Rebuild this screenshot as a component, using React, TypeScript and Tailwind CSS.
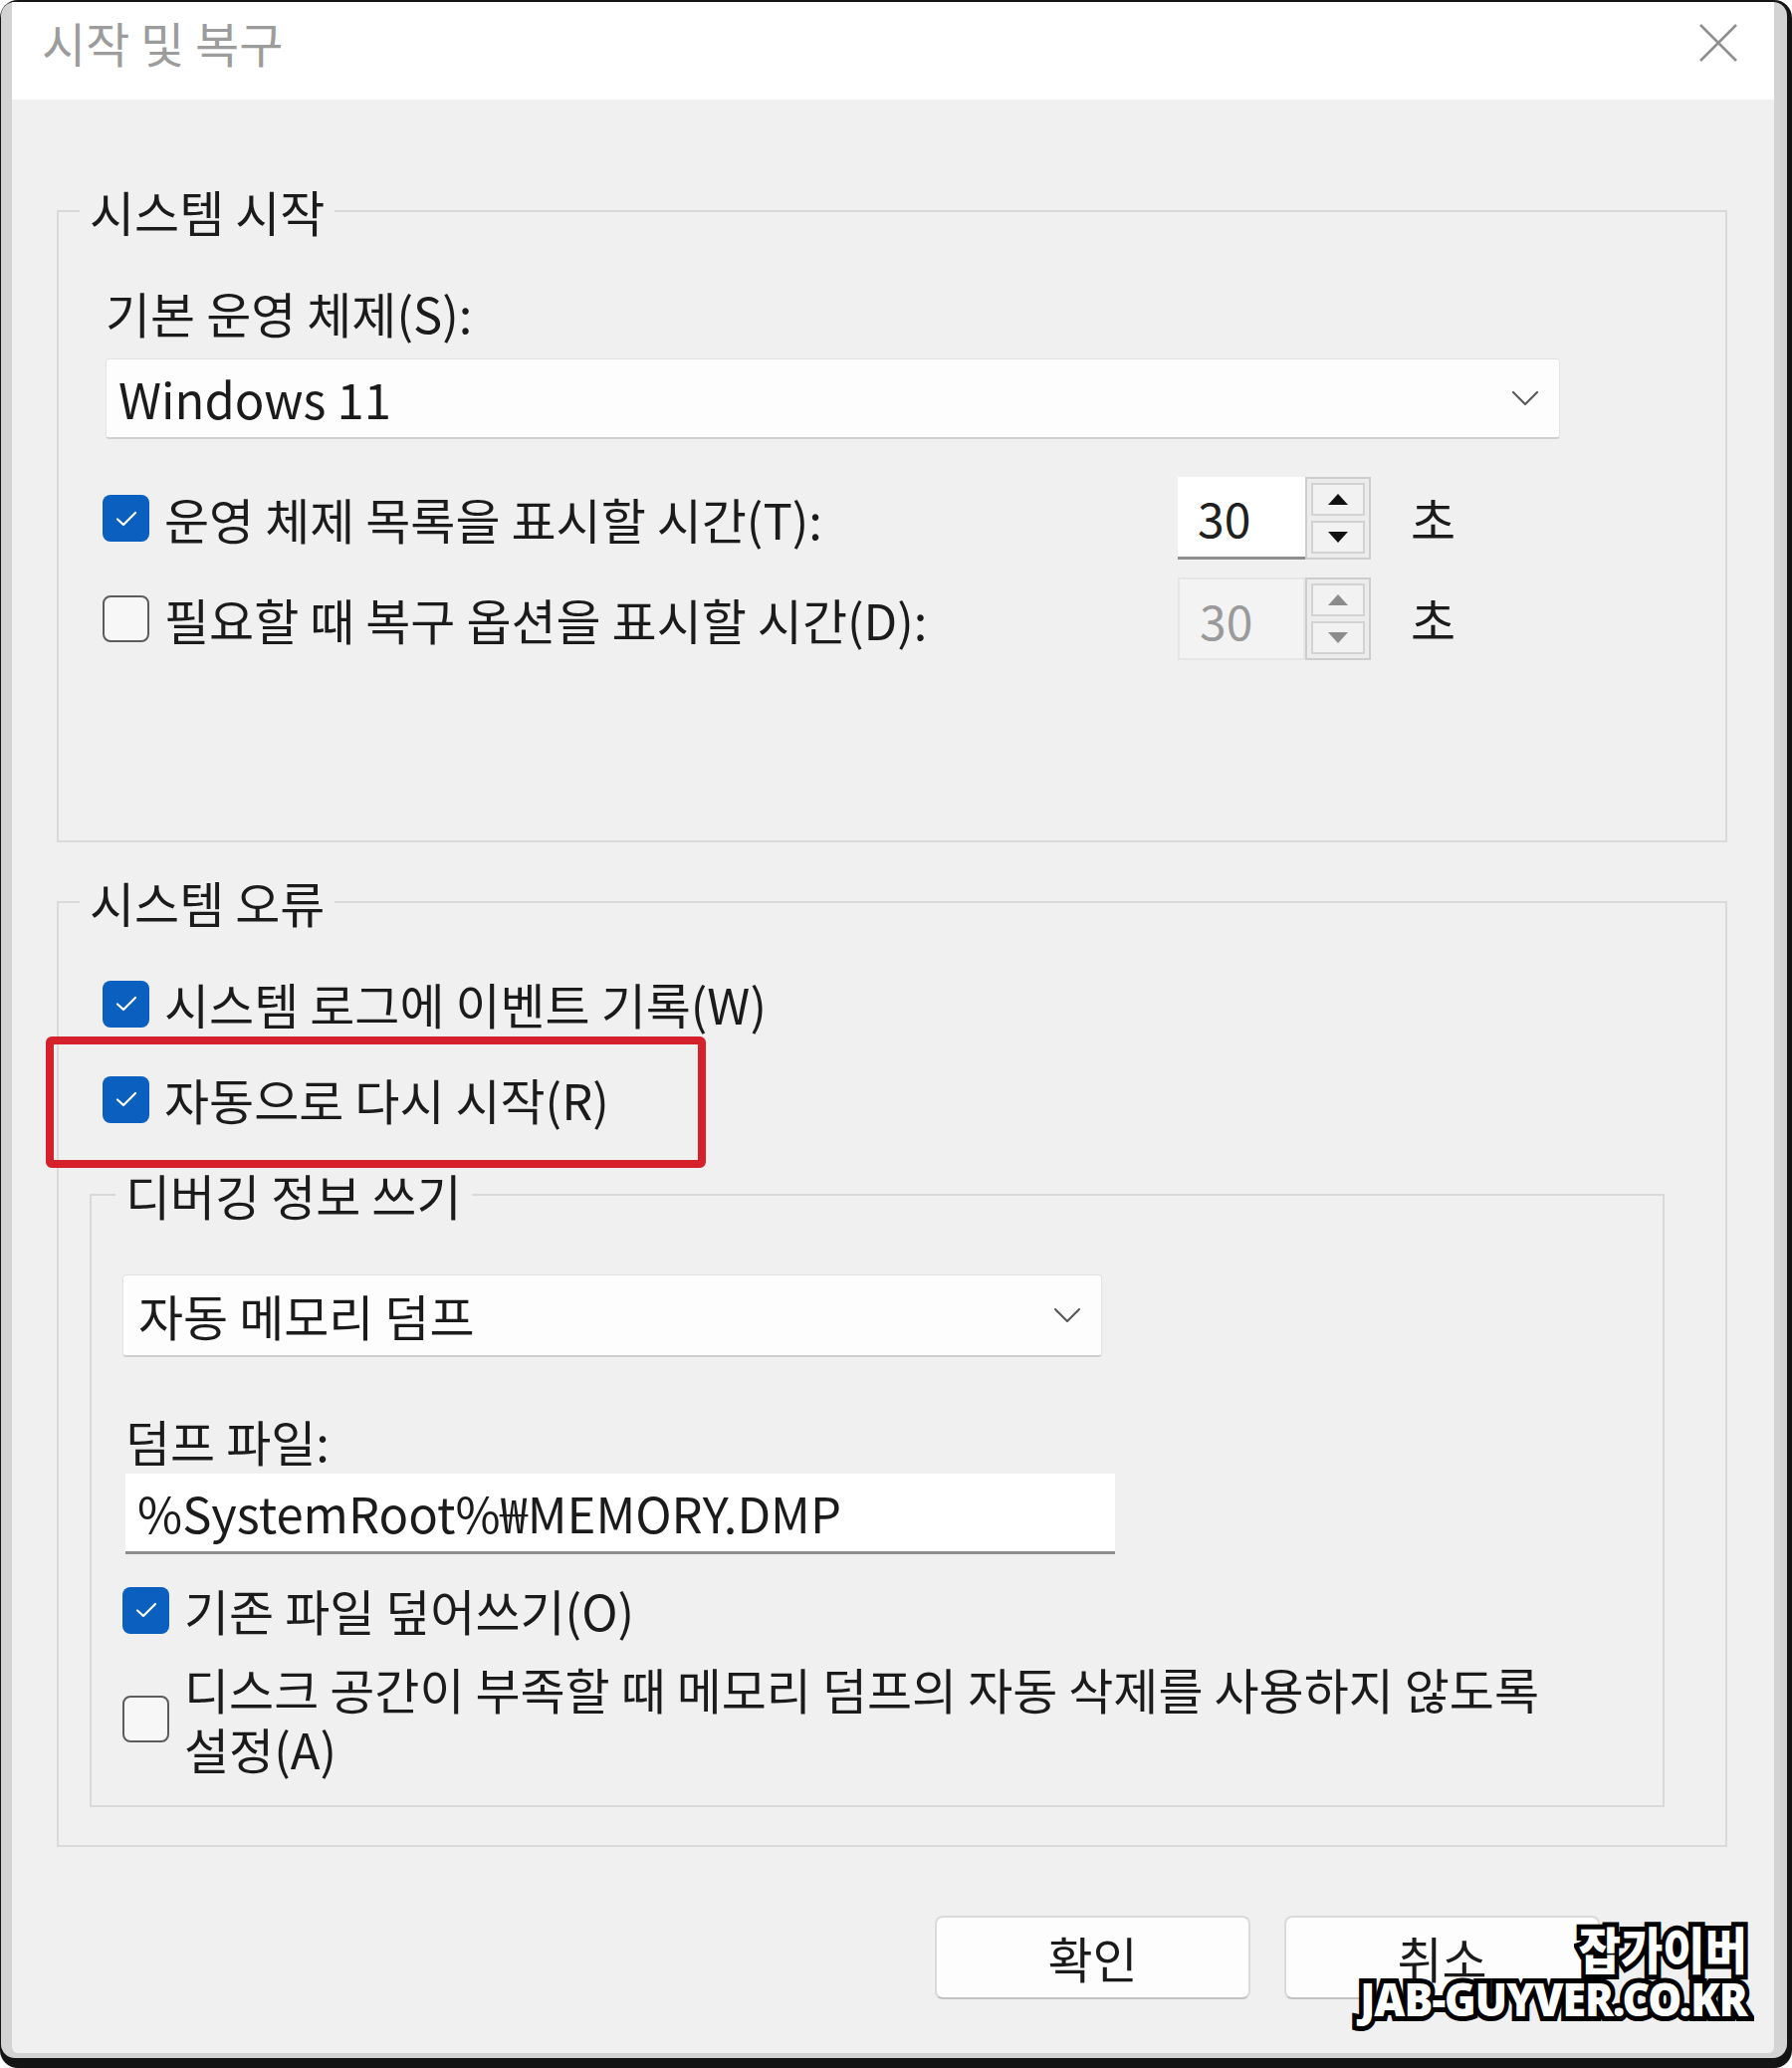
import React from "react";

const ui = "font-['Noto_Sans_CJK_KR','Noto_Sans',sans-serif]";

function Check({ checked }: { checked: boolean }) {
  if (!checked) {
    return (
      <div className="w-[47px] h-[47px] shrink-0 rounded-[8px] border-2 border-[#5c5c5c] bg-[#f7f7f7]" />
    );
  }
  return (
    <div className="w-[47px] h-[47px] shrink-0 rounded-[8px] bg-[#0b5fbf] flex items-center justify-center">
      <svg width="26" height="20" viewBox="0 0 26 20" fill="none">
        <path d="M4 10.5 L10 16 L22 4" stroke="#ffffff" strokeWidth="2.2" strokeLinecap="round" strokeLinejoin="round" />
      </svg>
    </div>
  );
}

function Chevron() {
  return (
    <svg width="28" height="16" viewBox="0 0 28 16" fill="none">
      <path d="M2 2 L14 14 L26 2" stroke="#5a5a5a" strokeWidth="2.2" strokeLinecap="round" strokeLinejoin="round" />
    </svg>
  );
}

function Spin({ disabled }: { disabled?: boolean }) {
  const arrow = disabled ? "#8c8c8c" : "#111111";
  return (
    <div className="flex h-[83px] w-[194px] shrink-0">
      <div
        className={`w-[128px] h-full flex items-center pl-[20px] text-[48px] ${
          disabled
            ? "bg-[#f3f3f3] border-2 border-[#e6e6e6] text-[#9a9a9a]"
            : "bg-white border-b-[3px] border-[#8e8e8e] text-[#202020]"
        }`}
      >
        30
      </div>
      <div className="flex-1 h-full border-2 border-[#cdcdcd] bg-[#ececec] p-[4px] flex flex-col gap-[5px]">
        <div className="flex-1 border-2 border-[#d2d2d2] bg-[#f2f2f2] flex items-center justify-center">
          <svg width="20" height="11" viewBox="0 0 20 11">
            <path d="M10 0 L20 11 L0 11 Z" fill={arrow} />
          </svg>
        </div>
        <div className="flex-1 border-2 border-[#d2d2d2] bg-[#f2f2f2] flex items-center justify-center">
          <svg width="20" height="11" viewBox="0 0 20 11">
            <path d="M0 0 L20 0 L10 11 Z" fill={arrow} />
          </svg>
        </div>
      </div>
    </div>
  );
}

function SpinRow({ checked, label, disabled }: { checked: boolean; label: string; disabled?: boolean }) {
  return (
    <div className="flex items-center h-[83px] pl-[44px]">
      <div className="w-[1080px] flex items-center gap-[15px]">
        <Check checked={checked} />
        <span className="leading-[60px]">{label}</span>
      </div>
      <Spin disabled={disabled} />
      <span className="ml-[40px] leading-[60px]">초</span>
    </div>
  );
}

export default function App() {
  return (
    <div className={`w-[1800px] h-[2077px] bg-white ${ui} text-[49px] text-[#1b1b1b]`}>
      <div className="h-full rounded-[18px] bg-[#141414] pt-[2px] pl-[1px] pr-[5px] pb-[10px]">
        <div className="h-full rounded-[14px] bg-[#d3d3d3] pl-[11px] pr-[13px] pb-[5px] overflow-hidden">
          <div className="relative h-full bg-[#f0f0f0] rounded-bl-[6px] rounded-br-[6px] flex flex-col">
            {/* title bar */}
            <div className="h-[98px] bg-white flex items-start justify-between pl-[30px] pr-[36px] pt-[10px]">
              <span className="text-[48px] leading-[60px] text-[#9c9c9c]">시작 및 복구</span>
              <svg width="40" height="40" viewBox="0 0 40 40" className="mt-[11px]">
                <path d="M2 2 L38 38 M38 2 L2 38" stroke="#8f8f8f" strokeWidth="2.6" />
              </svg>
            </div>

            {/* 시스템 시작 */}
            <fieldset className="mt-[82px] ml-[45px] mr-[47px] border-2 border-[#d9d9d9]">
              <legend className="ml-[21px] px-[10px] leading-[60px]">시스템 시작</legend>
              <div className="pt-[42px] pb-[181px]">
                <div className="pl-[47px] leading-[60px]">기본 운영 체제(S):</div>
                <div className="mt-[16px] ml-[47px] w-[1461px] h-[81px] bg-[#fdfdfd] border border-[#e2e2e2] border-b-2 border-b-[#cfcfcf] rounded-[4px] flex items-center justify-between pl-[12px] pr-[20px]">
                  <span className="leading-[60px]">Windows 11</span>
                  <Chevron />
                </div>
                <div className="mt-[38px]">
                  <SpinRow checked label="운영 체제 목록을 표시할 시간(T):" />
                </div>
                <div className="mt-[18px]">
                  <SpinRow checked={false} disabled label="필요할 때 복구 옵션을 표시할 시간(D):" />
                </div>
              </div>
            </fieldset>

            {/* 시스템 오류 */}
            <fieldset className="mt-[30px] ml-[45px] mr-[47px] border-2 border-[#d9d9d9]">
              <legend className="ml-[21px] px-[10px] leading-[60px]">시스템 오류</legend>
              <div className="pt-[42px] pb-[38px]">
                <div className="flex items-center gap-[15px] pl-[44px] h-[60px]">
                  <Check checked />
                  <span className="leading-[60px]">시스템 로그에 이벤트 기록(W)</span>
                </div>
                <div className="relative mt-[36px] flex items-center gap-[15px] pl-[44px] h-[60px]">
                  <Check checked />
                  <span className="leading-[60px]">자동으로 다시 시작(R)</span>
                  <div className="absolute left-[-13px] top-[-33px] w-[663px] h-[132px] border-[8px] border-[#d5212b] rounded-[6px] pointer-events-none" />
                </div>

                {/* 디버깅 정보 쓰기 */}
                <fieldset className="mt-[36px] ml-[31px] mr-[61px] border-2 border-[#d9d9d9]">
                  <legend className="ml-[24px] px-[10px] leading-[60px]">디버깅 정보 쓰기</legend>
                  <div className="pt-[50px] pb-[27px]">
                    <div className="ml-[31px] w-[984px] h-[83px] bg-[#fdfdfd] border border-[#e2e2e2] border-b-2 border-b-[#cfcfcf] rounded-[4px] flex items-center justify-between pl-[15px] pr-[20px]">
                      <span className="leading-[60px]">자동 메모리 덤프</span>
                      <Chevron />
                    </div>
                    <div className="mt-[54px] pl-[34px] leading-[60px]">덤프 파일:</div>
                    <div className="mt-[3px] ml-[34px] w-[994px] h-[81px] bg-white border-b-[3px] border-[#8e8e8e] flex items-center pl-[12px]">
                      <span className="leading-[60px]">%SystemRoot%₩MEMORY.DMP</span>
                    </div>
                    <div className="mt-[26px] flex items-center gap-[15px] pl-[31px] h-[60px]">
                      <Check checked />
                      <span className="leading-[60px]">기존 파일 덮어쓰기(O)</span>
                    </div>
                    <div className="mt-[19px] flex items-center gap-[15px] pl-[31px]">
                      <Check checked={false} />
                      <span className="leading-[60px]">
                        디스크 공간이 부족할 때 메모리 덤프의 자동 삭제를 사용하지 않도록
                        <br />
                        설정(A)
                      </span>
                    </div>
                  </div>
                </fieldset>
              </div>
            </fieldset>

            {/* buttons */}
            <div className="mt-[69px] flex justify-end gap-[34px] pr-[175px]">
              <button className="w-[317px] h-[84px] bg-[#fdfdfd] border-2 border-[#dadada] border-b-[#c2c2c2] rounded-[8px] text-[49px] leading-[60px] text-[#1b1b1b]">
                확인
              </button>
              <button className="w-[317px] h-[84px] bg-[#fdfdfd] border-2 border-[#dadada] border-b-[#c2c2c2] rounded-[8px] text-[49px] leading-[60px] text-[#1b1b1b]">
                취소
              </button>
            </div>

            {/* watermark */}
            <div className="absolute right-[27px] bottom-[30px] text-right font-black text-white [-webkit-text-stroke:10px_#000] [paint-order:stroke_fill] flex flex-col items-end">
              <span className="block origin-right scale-x-[0.92] text-[50px] leading-[52px]">잡가이버</span>
              <span className="block origin-right scale-x-[0.93] font-['Noto_Sans',sans-serif] text-[46px] leading-[50px] tracking-[-1px]">JAB-GUYVER.CO.KR</span>
            </div>
          </div>
        </div>
      </div>
    </div>
  );
}
